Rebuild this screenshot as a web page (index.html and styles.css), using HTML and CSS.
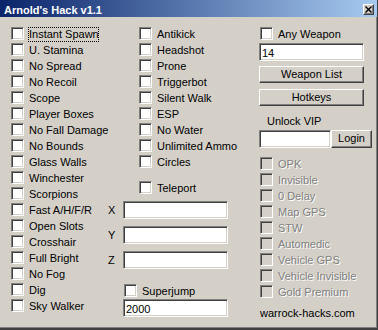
FILE: index.html
```html
<!DOCTYPE html>
<html>
<head>
<meta charset="utf-8">
<title>Arnold's Hack v1.1</title>
<link rel="stylesheet" href="styles.css">
</head>
<body>
<div class="window">
<div class="titlebar">
    <span class="title">Arnold's Hack v1.1</span>
    <span class="close"><svg width="7" height="7" viewBox="0 0 7 7"><path d="M0.5 0.5l6 6M6.5 0.5l-6 6" stroke="#000" stroke-width="1.4"/></svg></span>
</div>
<div class="client">
<div class="col">
    <div class="row"><input type="checkbox"><span class="label focus">Instant Spawn</span></div>
    <div class="row"><input type="checkbox"><span class="label">U. Stamina</span></div>
    <div class="row"><input type="checkbox"><span class="label">No Spread</span></div>
    <div class="row"><input type="checkbox"><span class="label">No Recoil</span></div>
    <div class="row"><input type="checkbox"><span class="label">Scope</span></div>
    <div class="row"><input type="checkbox"><span class="label">Player Boxes</span></div>
    <div class="row"><input type="checkbox"><span class="label">No Fall Damage</span></div>
    <div class="row"><input type="checkbox"><span class="label">No Bounds</span></div>
    <div class="row"><input type="checkbox"><span class="label">Glass Walls</span></div>
    <div class="row"><input type="checkbox"><span class="label">Winchester</span></div>
    <div class="row"><input type="checkbox"><span class="label">Scorpions</span></div>
    <div class="row"><input type="checkbox"><span class="label">Fast A/H/F/R</span></div>
    <div class="row"><input type="checkbox"><span class="label">Open Slots</span></div>
    <div class="row"><input type="checkbox"><span class="label">Crosshair</span></div>
    <div class="row"><input type="checkbox"><span class="label">Full Bright</span></div>
    <div class="row"><input type="checkbox"><span class="label">No Fog</span></div>
    <div class="row"><input type="checkbox"><span class="label">Dig</span></div>
    <div class="row"><input type="checkbox"><span class="label">Sky Walker</span></div>
</div>

<div class="col">
    <div class="indent">
        <div class="row"><input type="checkbox"><span class="label">Antikick</span></div>
        <div class="row"><input type="checkbox"><span class="label">Headshot</span></div>
        <div class="row"><input type="checkbox"><span class="label">Prone</span></div>
        <div class="row"><input type="checkbox"><span class="label">Triggerbot</span></div>
        <div class="row"><input type="checkbox"><span class="label">Silent Walk</span></div>
        <div class="row"><input type="checkbox"><span class="label">ESP</span></div>
        <div class="row"><input type="checkbox"><span class="label">No Water</span></div>
        <div class="row"><input type="checkbox"><span class="label">Unlimited Ammo</span></div>
        <div class="row"><input type="checkbox"><span class="label">Circles</span></div>
        <div class="row teleport"><input type="checkbox"><span class="label">Teleport</span></div>
    </div>
    <div class="coords">
        <div class="coord"><span class="axis">X</span><div class="edit"></div></div>
        <div class="coord"><span class="axis">Y</span><div class="edit"></div></div>
        <div class="coord"><span class="axis">Z</span><div class="edit"></div></div>
    </div>
    <div class="row superjump"><input type="checkbox"><span class="label">Superjump</span></div>
    <div class="edit jump-height">2000</div>
</div>

<div class="col side">
    <div class="row any"><input type="checkbox"><span class="label">Any Weapon</span></div>
    <div class="edit weapon-id">14</div>
    <div class="btn weapon-list">Weapon List</div>
    <div class="btn hotkeys">Hotkeys</div>
    <div class="vip-title">Unlock VIP</div>
    <div class="login">
        <div class="edit vip-key"></div>
        <div class="btn login-btn">Login</div>
    </div>
    <div class="vip">
        <div class="row"><input type="checkbox" disabled><span class="label">OPK</span></div>
        <div class="row"><input type="checkbox" disabled><span class="label">Invisible</span></div>
        <div class="row"><input type="checkbox" disabled><span class="label">0 Delay</span></div>
        <div class="row"><input type="checkbox" disabled><span class="label">Map GPS</span></div>
        <div class="row"><input type="checkbox" disabled><span class="label">STW</span></div>
        <div class="row"><input type="checkbox" disabled><span class="label">Automedic</span></div>
        <div class="row"><input type="checkbox" disabled><span class="label">Vehicle GPS</span></div>
        <div class="row"><input type="checkbox" disabled><span class="label">Vehicle Invisible</span></div>
        <div class="row"><input type="checkbox" disabled><span class="label">Gold Premium</span></div>
    </div>
    <div class="site">warrock-hacks.com</div>
</div>
</div>
</div>
</body>
</html>
```

FILE: styles.css
```css
* { box-sizing: border-box; }
body { margin: 0; background: #d4d0c8; color: #000; font: 11px "Liberation Sans", Arial, sans-serif; }

.window { width: 378px; height: 330px; background: #d4d0c8; border-right: 1px solid #404040; border-bottom: 2px solid #404040; box-shadow: inset -1px -1px #808080; }
.titlebar { height: 17px; display: flex; justify-content: space-between; align-items: flex-start; padding: 0 3px 0 4px; background: linear-gradient(to right, #0a246a, #a6caf0); color: #fff; font-weight: bold; }
.title { padding-top: 3px; line-height: 14px; }
.close { margin-top: 4px; width: 11px; height: 11px; display: flex; align-items: center; justify-content: center; background: #d4d0c8; border: 1px solid; border-color: #fff #404040 #404040 #fff; box-shadow: inset -1px -1px #808080; }

.client { display: grid; grid-template-columns: 96px 152px 1fr; padding: 9px 0 0 11px; }

.row { display: flex; align-items: flex-start; height: 16px; white-space: nowrap; }
.row input { -webkit-appearance: none; appearance: none; margin: 1px 5px 0 0; width: 13px; height: 13px; flex: none; background: #fff; border: 1px solid; border-color: #808080 #fff #fff #808080; box-shadow: inset 1px 1px #404040, inset -1px -1px #d4d0c8; }
.row input:disabled { background: #d4d0c8; }
.row input:disabled + .label { color: #808080; text-shadow: 1px 1px #fff; }
.label { line-height: 16px; }
.label.focus { margin: 1px 0 0 -1px; width: 71px; height: 15px; line-height: 13px; overflow: hidden; border: 1px dotted #000; }

.indent { padding-left: 32px; }
.teleport { margin-top: 10px; }
.coords { display: flex; flex-direction: column; gap: 7px; margin-top: 5px; }
.coord { display: flex; }
.axis { width: 16px; padding-left: 1px; line-height: 18px; }
.superjump { margin: 14px 0 0 17px; }
.jump-height { margin-left: 16px; }

.edit { width: 105px; height: 18px; padding: 1px 0 0 2px; line-height: 16px; background: #fff; border: 1px solid; border-color: #808080 #fff #fff #808080; box-shadow: inset 1px 1px #404040, inset -1px -1px #d4d0c8; }
.btn { width: 105px; height: 17px; text-align: center; line-height: 14px; background: #d4d0c8; border: 1px solid; border-color: #fff #404040 #404040 #fff; box-shadow: inset -1px -1px #808080; }

.any { margin-left: 1px; }
.weapon-id { margin-top: 1px; }
.weapon-list { margin-top: 5px; }
.hotkeys { margin-top: 6px; }
.vip-title { margin: 7px 0 0 8px; line-height: 16px; }
.login { display: flex; margin-top: 1px; }
.vip-key { width: 72px; }
.login-btn { width: 41px; height: 18px; line-height: 15px; }
.vip { margin: 8px 0 0 1px; }
.site { margin: 5px 0 0 1px; line-height: 16px; }
```
